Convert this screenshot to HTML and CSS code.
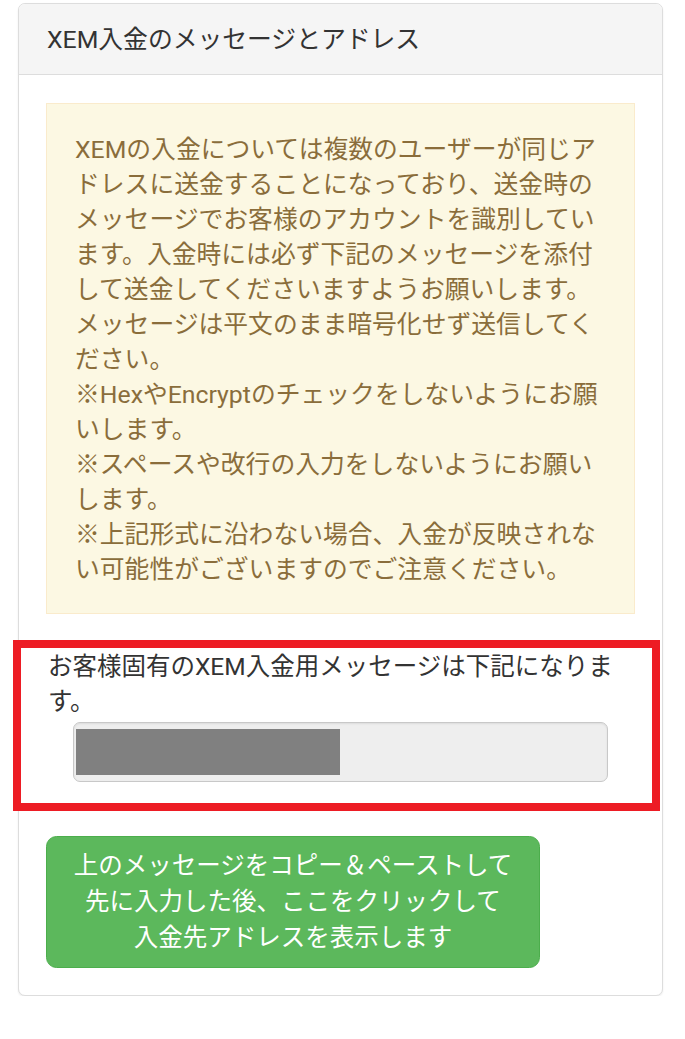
FILE: index.html
```html
<!DOCTYPE html>
<html lang="ja">
<head>
<meta charset="utf-8">
<title>XEM入金のメッセージとアドレス</title>
<link rel="stylesheet" href="styles.css">
</head>
<body>
<div class="page">
  <div class="panel">
    <div class="panel-heading">XEM入金のメッセージとアドレス</div>
    <div class="panel-body">
      <div class="alert">XEMの入金については複数のユーザーが同じア<br>ドレスに送金することになっており、送金時の<br>メッセージでお客様のアカウントを識別してい<br>ます。入金時には必ず下記のメッセージを添付<br>して送金してくださいますようお願いします。<br>メッセージは平文のまま暗号化せず送信してく<br>ださい。<br>※HexやEncryptのチェックをしないようにお願<br>いします。<br>※スペースや改行の入力をしないようにお願い<br>します。<br>※上記形式に沿わない場合、入金が反映されな<br>い可能性がございますのでご注意ください。</div>
      <div class="form-group">
        <p class="label">お客様固有のXEM入金用メッセージは下記になりま<br>す。</p>
        <div class="input"><span class="redact"></span></div>
        <div class="highlight"></div>
      </div>
      <button class="btn">上のメッセージをコピー＆ペーストして<br>先に入力した後、ここをクリックして<br>入金先アドレスを表示します</button>
    </div>
  </div>
</div>
</body>
</html>
```

FILE: styles.css
```css
html, body {
  margin: 0;
  padding: 0;
  background: #ffffff;
}

body {
  font-family: Roboto, "Noto Sans CJK JP", sans-serif;
  font-size: 24.5px;
  line-height: 35px;
  color: #333333;
}

.page {
  padding: 3px 0 0 18px;
}

.panel {
  width: 645px;
  box-sizing: border-box;
  border: 1px solid #dddddd;
  border-radius: 7px;
  background: #ffffff;
  box-shadow: 0 1px 2px rgba(0, 0, 0, 0.08);
}

.panel-heading {
  background: #f5f5f5;
  border-bottom: 1px solid #dddddd;
  border-radius: 6px 6px 0 0;
  padding: 17.5px 28px;
  font-size: 24.8px;
  color: #333333;
}

.panel-body {
  padding: 28px 27px 27px 27px;
}

.alert {
  background: #fcf8e3;
  border: 1px solid #faebcc;
  color: #8a6d3b;
  padding: 28px 28px 26px 28px;
  margin-bottom: 35px;
  font-size: 24.8px;
  white-space: nowrap;
}

.form-group {
  position: relative;
  margin-bottom: 54px;
}

.label {
  margin: 0 0 3px 0;
  padding-left: 2px;
}

.input {
  margin-left: 27px;
  width: 535px;
  height: 60px;
  box-sizing: border-box;
  border: 1px solid #c8c8c8;
  border-radius: 7px;
  background: #eeeeee;
  box-shadow: inset 0 1px 2px rgba(0, 0, 0, 0.075);
  padding: 6px 0 0 2px;
}

.redact {
  display: block;
  width: 264px;
  height: 46px;
  background: #808080;
}

.highlight {
  position: absolute;
  left: -33px;
  top: -9px;
  right: -25px;
  bottom: -29px;
  border: 8px solid #ed1c24;
  pointer-events: none;
}

.btn {
  display: block;
  font-family: Roboto, "Noto Sans CJK JP", sans-serif;
  font-size: 24.5px;
  line-height: 36px;
  color: #ffffff;
  background: #5cb85c;
  border: 1px solid #4cae4c;
  border-radius: 10.5px;
  padding: 11px 0;
  text-align: center;
  width: 494px;
  cursor: pointer;
}
```
